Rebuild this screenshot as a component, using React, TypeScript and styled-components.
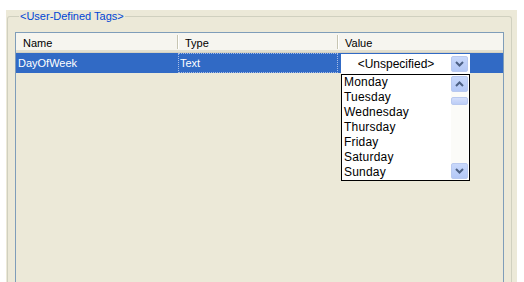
import React from "react";
import styled, { createGlobalStyle } from "styled-components";

const GlobalStyle = createGlobalStyle`
  html, body {
    margin: 0;
    padding: 0;
    background: #ffffff;
    overflow: hidden;
  }
  body {
    font-family: "Liberation Sans", Arial, sans-serif;
    font-size: 11px;
  }
`;

const Page = styled.div`
  width: 524px;
  height: 282px;
  padding: 10px 7px 0 6px;
  box-sizing: border-box;
`;

const Panel = styled.div`
  height: 100%;
  background: #ece9d8;
  padding: 0 5px 0 1px;
  box-sizing: border-box;
`;

const Group = styled.fieldset`
  margin: 0;
  height: 100%;
  box-sizing: border-box;
  border: 1px solid #d0d0bf;
  border-bottom: none;
  border-radius: 3px 3px 0 0;
  padding: 9px 7px 0 7px;
  display: flex;
  flex-direction: column;
`;

const Legend = styled.legend`
  color: #0046d5;
  font-size: 11px;
  padding: 0 1px;
  margin-left: 4px;
  line-height: 13px;
`;

const Grid = styled.div`
  flex: 1;
  border: 1px solid #7f9db9;
  border-bottom: none;
  background: #ece9d8;
  display: flex;
  flex-direction: column;
`;

const Header = styled.div`
  display: grid;
  grid-template-columns: 162px 160px 164px;
  height: 19px;
  background: #f6f5ef;
  border-bottom: 1px solid #d5d2c2;
  box-shadow: inset 0 -2px 0 #e2dfd0;
`;

const HeadCell = styled.div<{ $last?: boolean }>`
  display: flex;
  align-items: center;
  padding-left: 7px;
  color: #000;
  border-right: ${(p) => (p.$last ? "none" : "1px solid #c7c5b2")};
  box-shadow: ${(p) => (p.$last ? "none" : "1px 0 0 #ffffff")};
  margin: 2px 0 3px;
  padding-top: 1px;
`;

const Row = styled.div`
  display: grid;
  grid-template-columns: 162px 160px 164px;
  height: 20px;
  background: #316ac5;
  color: #ffffff;
`;

const Cell = styled.div<{ $focus?: boolean }>`
  display: flex;
  align-items: center;
  padding-left: 1px;
  box-sizing: border-box;
  border: 1px dotted ${(p) => (p.$focus ? "#a8bde6" : "transparent")};
  position: relative;
`;

const Combo = styled.div`
  position: absolute;
  left: 2px;
  top: 0;
  width: 129px;
  height: 20px;
  background: #ffffff;
  display: flex;
  align-items: center;
  color: #000;
  font-size: 12px;
`;

const ComboText = styled.span`
  flex: 1;
  text-align: center;
`;

const ArrowBtn = styled.div`
  width: 17px;
  height: 16px;
  margin-right: 2px;
  background: linear-gradient(#c8d8fb, #b4c8f6);
  border: 1px solid #b9c9ef;
  box-sizing: border-box;
  border-radius: 2px;
  display: flex;
  align-items: center;
  justify-content: center;
`;

const DropList = styled.div`
  position: absolute;
  left: 2px;
  top: 20px;
  width: 129px;
  height: 107px;
  box-sizing: border-box;
  border: 1px solid #000;
  background: #ffffff;
  display: flex;
  z-index: 2;
`;

const Items = styled.div`
  flex: 1;
`;

const Item = styled.div`
  height: 15px;
  line-height: 15px;
  padding-left: 2px;
  font-size: 12px;
  letter-spacing: 0.2px;
  color: #000;
`;

const ScrollBar = styled.div`
  width: 17px;
  margin: 1px 1px 1px 0;
  background: #fbfbf8;
  display: flex;
  flex-direction: column;
  justify-content: space-between;
  position: relative;
`;

const Thumb = styled.div`
  position: absolute;
  left: 0;
  top: 21px;
  width: 17px;
  height: 8px;
  box-sizing: border-box;
  border: 1px solid #b9c9ef;
  border-radius: 2px;
  background: linear-gradient(#d3defb, #bccdf6);
`;

const Chevron = ({ up }: { up?: boolean }) => (
  <svg width="9" height="6" viewBox="0 0 9 6">
    <path
      d={up ? "M1 5 L4.5 1.5 L8 5" : "M1 1 L4.5 4.5 L8 1"}
      fill="none"
      stroke="#4d6185"
      strokeWidth="2"
    />
  </svg>
);

const days = ["Monday", "Tuesday", "Wednesday", "Thursday", "Friday", "Saturday", "Sunday"];

const App = (): JSX.Element => {
  return (
    <Page>
      <GlobalStyle />
      <Panel>
        <Group>
          <Legend>&lt;User-Defined Tags&gt;</Legend>
          <Grid>
            <Header>
              <HeadCell>Name</HeadCell>
              <HeadCell>Type</HeadCell>
              <HeadCell $last>Value</HeadCell>
            </Header>
            <Row>
              <Cell>DayOfWeek</Cell>
              <Cell $focus>Text</Cell>
              <Cell>
                <Combo>
                  <ComboText>&lt;Unspecified&gt;</ComboText>
                  <ArrowBtn>
                    <Chevron />
                  </ArrowBtn>
                </Combo>
                <DropList>
                  <Items>
                    {days.map((d) => (
                      <Item key={d}>{d}</Item>
                    ))}
                  </Items>
                  <ScrollBar>
                    <ArrowBtn>
                      <Chevron up />
                    </ArrowBtn>
                    <Thumb />
                    <ArrowBtn>
                      <Chevron />
                    </ArrowBtn>
                  </ScrollBar>
                </DropList>
              </Cell>
            </Row>
          </Grid>
        </Group>
      </Panel>
    </Page>
  );
};

export default App;
